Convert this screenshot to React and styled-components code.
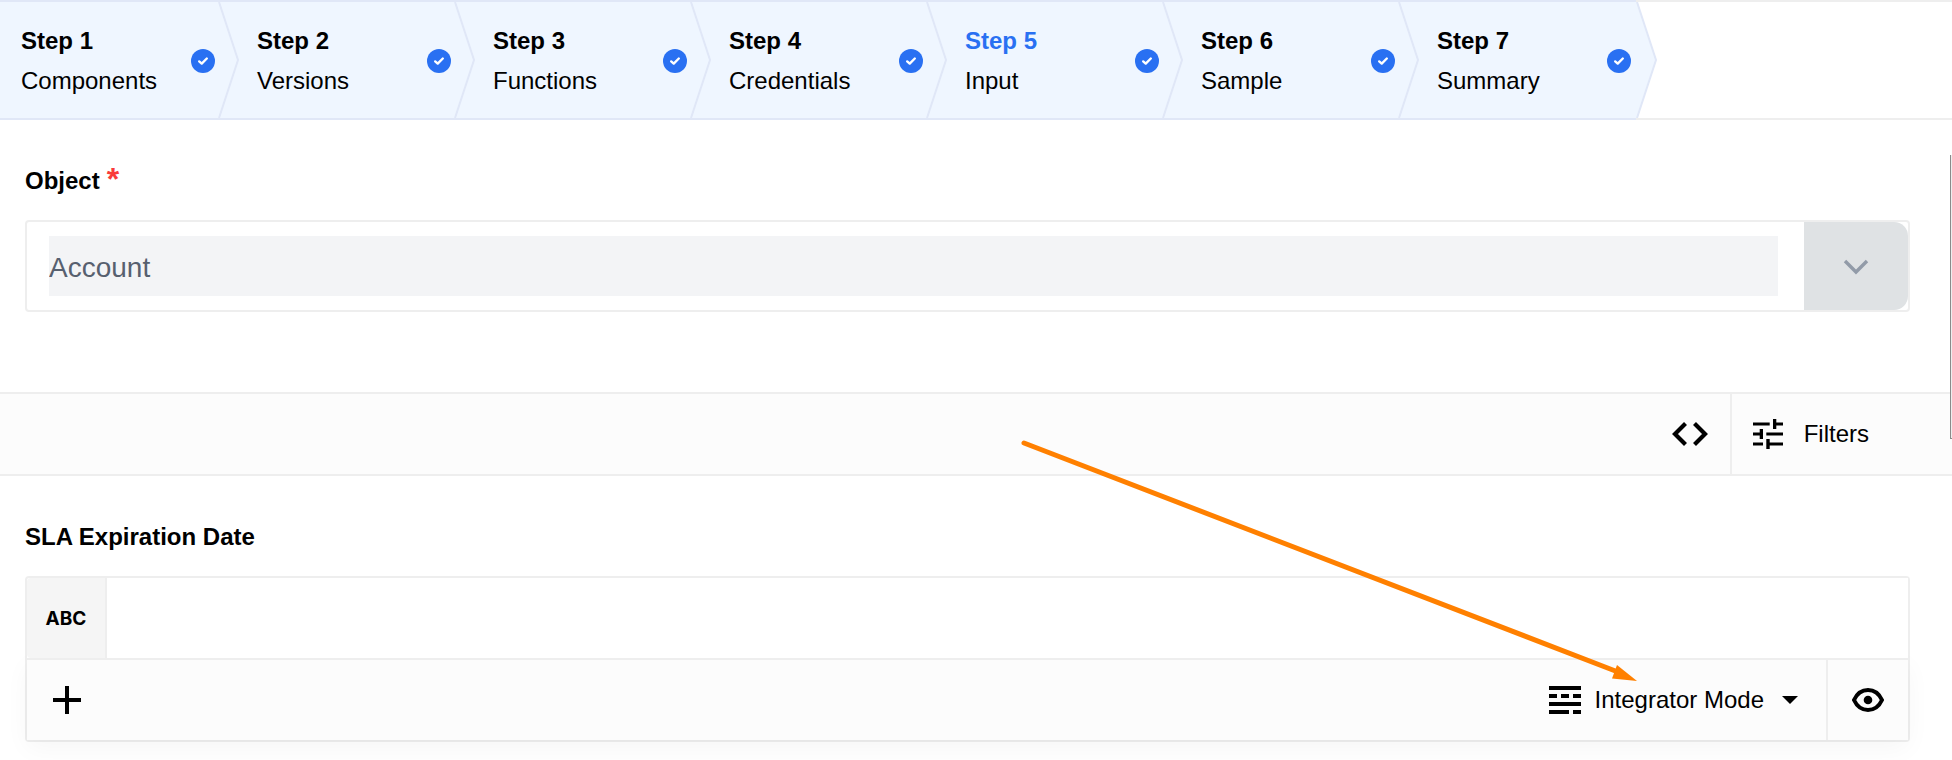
import React from "react";
import styled, { createGlobalStyle } from "styled-components";

const line = "#eeeeee";
const stepLine = "#e0e7f7";

const GlobalStyle = createGlobalStyle`
  * { box-sizing: border-box; }
  body {
    margin: 0;
    background: #fff;
    color: #000;
    font-family: "Liberation Sans", Arial, sans-serif;
    font-size: 24px;
    line-height: 40px;
    overflow-x: hidden;
  }
  button, input { font: inherit; color: inherit; }
`;

const Page = styled.div`
  position: relative;
  padding-bottom: 18px;
`;

const Steps = styled.nav`
  display: flex;
  border-top: 2px solid ${line};
  border-bottom: 2px solid ${line};
`;

const StepLink = styled.a`
  position: relative;
  display: flex;
  align-items: center;
  justify-content: space-between;
  width: 236px;
  height: 120px;
  margin: -2px 0;
  padding: 2px 21px 0;
  border-top: 2px solid ${stepLine};
  border-bottom: 2px solid ${stepLine};
  background: #eff6ff;
  color: inherit;
  text-decoration: none;

  &:last-child {
    width: 220px;
    padding-right: 5px;
  }
`;

const StepText = styled.span`
  display: flex;
  flex-direction: column;
`;

const StepTitle = styled.strong`
  color: ${(p) => (p.$active ? "#2970f2" : "inherit")};
`;

const CheckMark = styled.svg`
  width: 24px;
  height: 24px;
`;

const StepEdge = styled.svg`
  position: absolute;
  z-index: 1;
  top: 0;
  left: 218px;
  width: 22px;
  height: 116px;

  ${StepLink}:last-child > & {
    left: 220px;
  }
`;

const Section = styled.section`
  padding: ${(p) => (p.$first ? "41px 42px 80px 25px" : "41px 42px 0 25px")};
`;

const Label = styled.label`
  display: flex;
  align-items: flex-start;
  gap: 7px;
  width: fit-content;
  height: 40px;
  margin-bottom: 19px;
  font-weight: bold;
`;

const Required = styled.span`
  color: #f93a3a;
  font-size: 32px;
  line-height: 36px;
`;

const SelectBox = styled.div`
  display: flex;
  align-items: center;
  height: 92px;
  padding-left: 22px;
  border: 2px solid ${line};
  border-radius: 4px;
`;

const SelectInput = styled.input`
  flex: 1;
  min-width: 0;
  height: 60px;
  margin-right: 26px;
  padding: 4px 0 0;
  border: 0;
  background: #f3f4f6;
  color: #57606f;
  font-size: 28px;
`;

const OpenButton = styled.button`
  display: flex;
  align-items: center;
  justify-content: center;
  align-self: stretch;
  width: 104px;
  padding: 2px 0 0;
  border: 0;
  border-radius: 0 14px 14px 0;
  background: #dfe2e4;
`;

const FilterBar = styled.div`
  display: flex;
  justify-content: flex-end;
  height: 84px;
  border-top: 2px solid ${line};
  border-bottom: 2px solid ${line};
  background: #fcfcfc;
`;

const ToolButton = styled.button`
  display: flex;
  align-items: center;
  gap: ${(p) => p.$gap || 0}px;
  padding: ${(p) => p.$pad};
  border: 0;
  border-left: ${(p) => (p.$divided ? `2px solid ${line}` : "0")};
  background: transparent;
`;

const Editor = styled.div`
  border: 2px solid ${line};
  border-radius: 4px;
`;

const EditorRow = styled.div`
  display: flex;
  height: 80px;
`;

const TypeTag = styled.span`
  display: flex;
  align-items: center;
  justify-content: center;
  width: 80px;
  padding-top: 2px;
  border-right: 2px solid ${line};
  border-radius: 4px 0 0 4px;
  background: #f5f5f5;
  font-family: Inter, sans-serif;
  font-size: 19px;
  font-weight: 700;
`;

const ValueInput = styled.input`
  flex: 1;
  min-width: 0;
  padding: 0 20px;
  border: 0;
  background: #fff;
`;

const EditorTools = styled(EditorRow)`
  height: 82px;
  border-top: 2px solid ${line};
  background: #fcfcfc;
  box-shadow: 0 8px 24px rgba(0, 0, 0, 0.04);
`;

const Spacer = styled.span`
  flex: 1;
`;

const Pointer = styled.svg`
  position: absolute;
  top: 436px;
  right: 312px;
  width: 620px;
  height: 250px;
  pointer-events: none;
`;

const ScrollThumb = styled.span`
  position: absolute;
  top: 155px;
  right: 0;
  width: 2px;
  height: 284px;
  border-left: 1px solid #8b8b8b;
  border-bottom: 1px solid #8b8b8b;
  background: #eeeeee;
`;

const steps = ["Components", "Versions", "Functions", "Credentials", "Input", "Sample", "Summary"];

function Step({ number, name, active }) {
  return (
    <StepLink href={`#step-${number}`} aria-current={active ? "step" : undefined}>
      <StepText>
        <StepTitle $active={active}>Step {number}</StepTitle>
        <span>{name}</span>
      </StepText>
      <CheckMark viewBox="0 0 24 24" aria-hidden="true">
        <circle cx="12" cy="12" r="12" fill="#2970f2" />
        <path d="M8.200 12.400l2.500 2.200 5.100-5.100" fill="none" stroke="#fff" strokeWidth="2.400" strokeLinecap="round" strokeLinejoin="round" />
      </CheckMark>
      <StepEdge viewBox="0 0 22 116" aria-hidden="true">
        <path d="M0 0H1L20 58L1 116H0Z" fill="#eff6ff" />
        <path d="M1 0L20 58L1 116" fill="none" stroke={stepLine} strokeWidth="2" />
      </StepEdge>
    </StepLink>
  );
}

export default function App() {
  return (
    <Page>
      <GlobalStyle />
      <Steps aria-label="Steps">
        {steps.map((name, i) => (
          <Step key={name} number={i + 1} name={name} active={name === "Input"} />
        ))}
      </Steps>

      <Section $first>
        <Label htmlFor="object">
          Object <Required>*</Required>
        </Label>
        <SelectBox>
          <SelectInput id="object" defaultValue="Account" disabled />
          <OpenButton type="button" aria-label="Open object list" disabled>
            <svg width="26" height="16" viewBox="0 0 26 16" fill="none">
              <path d="M2 2L13 13L24 2" stroke="#929ba8" strokeWidth="3.4" />
            </svg>
          </OpenButton>
        </SelectBox>
      </Section>

      <FilterBar>
        <ToolButton type="button" aria-label="Code view" $pad="0 21px">
          <svg width="38" height="26" viewBox="0 0 38 26" fill="none">
            <path d="M14.5 2.5L4 13L14.5 23.5M23.5 2.5L34 13L23.5 23.5" stroke="#000" strokeWidth="4.2" />
          </svg>
        </ToolButton>
        <ToolButton type="button" $divided $gap={21} $pad="0 83px 0 21px">
          <svg width="30" height="30" viewBox="0 0 30 30">
            <path d="M0 3.4H16.7V6.6H0ZM20 0H23.3V3.4H30V6.6H23.3V10H20ZM6.7 10H10V20H6.7V16.6H0V13.4H6.7ZM13.3 13.4H30V16.6H13.3ZM13.3 20H16.7V23.4H30V26.6H16.7V30H13.3ZM0 23.4H10V26.6H0Z" />
          </svg>
          Filters
        </ToolButton>
      </FilterBar>

      <Section>
        <Label htmlFor="sla">SLA Expiration Date</Label>
        <Editor>
          <EditorRow>
            <TypeTag>ABC</TypeTag>
            <ValueInput id="sla" />
          </EditorRow>
          <EditorTools>
            <ToolButton type="button" aria-label="Add" $pad="0 26px">
              <svg width="28" height="28" viewBox="0 0 28 28">
                <path d="M12 0H16V12H28V16H16V28H12V16H0V12H12Z" />
              </svg>
            </ToolButton>
            <Spacer />
            <ToolButton type="button" $gap={14} $pad="0 24px 0 20px">
              <svg width="32" height="28" viewBox="0 0 32 28">
                <path d="M0 0H32V4H0ZM0 8H8V12H0ZM12 8H20V12H12ZM24 8H32V12H24ZM0 16H32V20H0ZM0 24H20V28H0ZM24 24H32V28H24Z" />
              </svg>
              Integrator Mode
              <svg width="24" height="10" viewBox="0 0 24 10">
                <path d="M4 1H20L12 9Z" />
              </svg>
            </ToolButton>
            <ToolButton type="button" aria-label="Preview" $divided $pad="0 24px">
              <svg width="32" height="24" viewBox="0 0 32 24" fill="none">
                <path d="M2 12C5 5.500 10 2 16 2S27 5.500 30 12C27 18.500 22 22 16 22S5 18.500 2 12Z" stroke="#000" strokeWidth="4" />
                <circle cx="16" cy="12" r="4.300" fill="#000" />
              </svg>
            </ToolButton>
          </EditorTools>
        </Editor>
      </Section>

      <Pointer viewBox="0 0 620 250" aria-hidden="true">
        <path d="M4 7L598 236" stroke="#ff8000" strokeWidth="5" strokeLinecap="round" />
        <path d="M597 229L617 245L592 242.500Z" fill="#ff8000" />
      </Pointer>
      <ScrollThumb />
    </Page>
  );
}
